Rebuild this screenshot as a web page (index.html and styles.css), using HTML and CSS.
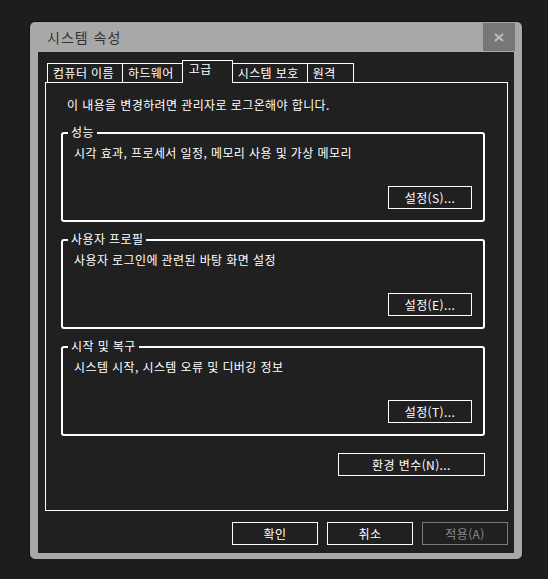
FILE: index.html
```html
<!DOCTYPE html>
<html lang="ko">
<head>
  <meta charset="UTF-8">
  <meta name="viewport" content="width=device-width, initial-scale=1.0">
  <title>시스템 속성</title>
  <link rel="stylesheet" href="styles.css">
</head>
<body>
  <div class="window">
    <div class="titlebar">
      <span class="title">시스템 속성</span>
      <button class="close" type="button" aria-label="닫기">
        <svg width="10" height="9" viewBox="0 0 10 9">
          <path d="M1 1 L9 8 M9 1 L1 8" stroke="#bdbdbd" stroke-width="2.2" fill="none"/>
        </svg>
      </button>
    </div>

    <div class="client">
      <div class="tabs">
        <div class="tab">컴퓨터 이름</div>
        <div class="tab">하드웨어</div>
        <div class="tab active">고급</div>
        <div class="tab">시스템 보호</div>
        <div class="tab">원격</div>
      </div>

      <div class="panel">
        <p class="notice">이 내용을 변경하려면 관리자로 로그온해야 합니다.</p>

        <section class="group">
          <h2 class="group-title">성능</h2>
          <p class="group-desc">시각 효과, 프로세서 일정, 메모리 사용 및 가상 메모리</p>
          <div class="group-actions">
            <button class="btn" type="button">설정(S)...</button>
          </div>
        </section>

        <section class="group">
          <h2 class="group-title">사용자 프로필</h2>
          <p class="group-desc">사용자 로그인에 관련된 바탕 화면 설정</p>
          <div class="group-actions">
            <button class="btn" type="button">설정(E)...</button>
          </div>
        </section>

        <section class="group">
          <h2 class="group-title">시작 및 복구</h2>
          <p class="group-desc">시스템 시작, 시스템 오류 및 디버깅 정보</p>
          <div class="group-actions">
            <button class="btn" type="button">설정(T)...</button>
          </div>
        </section>

        <div class="env-row">
          <button class="btn btn-env" type="button">환경 변수(N)...</button>
        </div>
      </div>

      <div class="dialog-buttons">
        <button class="btn btn-dialog" type="button">확인</button>
        <button class="btn btn-dialog" type="button">취소</button>
        <button class="btn btn-dialog" type="button" disabled>적용(A)</button>
      </div>
    </div>
  </div>
</body>
</html>
```

FILE: styles.css
```css
:root {
  --page-bg: #1d1d1d;
  --client-bg: #202020;
  --frame: #a8a8a8;
  --text: #ffffff;
  --muted: #7a7a7a;
}

* {
  box-sizing: border-box;
}

body {
  margin: 0;
  background: var(--page-bg);
  font-family: "Noto Sans CJK KR", "Noto Sans", sans-serif;
  font-size: 12px;
  letter-spacing: 0.4px;
  color: var(--text);
}

.window {
  width: 492px;
  height: 537px;
  margin: 22px 0 0 30px;
  padding: 0 8px 6px;
  background: var(--frame);
  border-radius: 5px;
  box-shadow: 0 0 0 1px #111;
  display: flex;
  flex-direction: column;
}

.titlebar {
  height: 30px;
  display: flex;
  align-items: flex-start;
  justify-content: space-between;
}

.title {
  padding-left: 9px;
  line-height: 30px;
  font-size: 14px;
  letter-spacing: 1px;
  color: #333333;
}

.close {
  width: 32px;
  height: 28px;
  margin: 1px -1px 0 0;
  padding: 0;
  border: none;
  background: #777777;
  display: flex;
  align-items: center;
  justify-content: center;
}

.client {
  flex: 1;
  background: var(--client-bg);
  padding: 8px 6px 8px 7px;
}

/* tabs */
.tabs {
  display: flex;
  align-items: flex-end;
  padding-left: 2px;
}

.tab {
  height: 19px;
  min-width: 47px;
  padding: 0 8px 0 5px;
  margin-left: -1px;
  border: 1px solid var(--text);
  border-bottom: none;
  line-height: 17px;
  white-space: nowrap;
}

.tab:first-child {
  margin-left: 0;
}

.tab.active {
  position: relative;
  z-index: 1;
  height: 23px;
  min-width: 51px;
  margin-bottom: -1px;
  padding: 0 5px 6px 6px;
  line-height: 16px;
  background: var(--client-bg);
}

.panel {
  height: 429px;
  border: 1px solid var(--text);
  padding: 14px 22px 0 15px;
}

.notice {
  margin: 0 0 19px 6px;
  line-height: 16px;
}

/* group boxes */
.group {
  position: relative;
  height: 90px;
  margin-bottom: 17px;
  border: 2px solid var(--text);
  border-radius: 3px;
  padding: 11px;
}

.group-title {
  position: absolute;
  top: -10px;
  left: 5px;
  margin: 0;
  padding: 0 3px;
  font-size: 12px;
  font-weight: normal;
  line-height: 16px;
  background: var(--client-bg);
}

.group-desc {
  margin: 0;
  line-height: 16px;
}

.group-actions {
  display: flex;
  justify-content: flex-end;
  margin-top: 25px;
}

/* buttons */
.btn {
  height: 23px;
  width: 84px;
  padding: 0;
  background: transparent;
  border: 1px solid var(--text);
  color: var(--text);
  font-family: inherit;
  font-size: 12px;
  letter-spacing: inherit;
  line-height: 21px;
}

.btn:disabled {
  border-color: var(--muted);
  color: #8a8a8a;
}

.env-row {
  display: flex;
  justify-content: flex-end;
}

.btn-env {
  width: 147px;
}

.dialog-buttons {
  display: flex;
  justify-content: flex-end;
  gap: 9px;
  margin-top: 11px;
}

.btn-dialog {
  width: 86px;
}
```
